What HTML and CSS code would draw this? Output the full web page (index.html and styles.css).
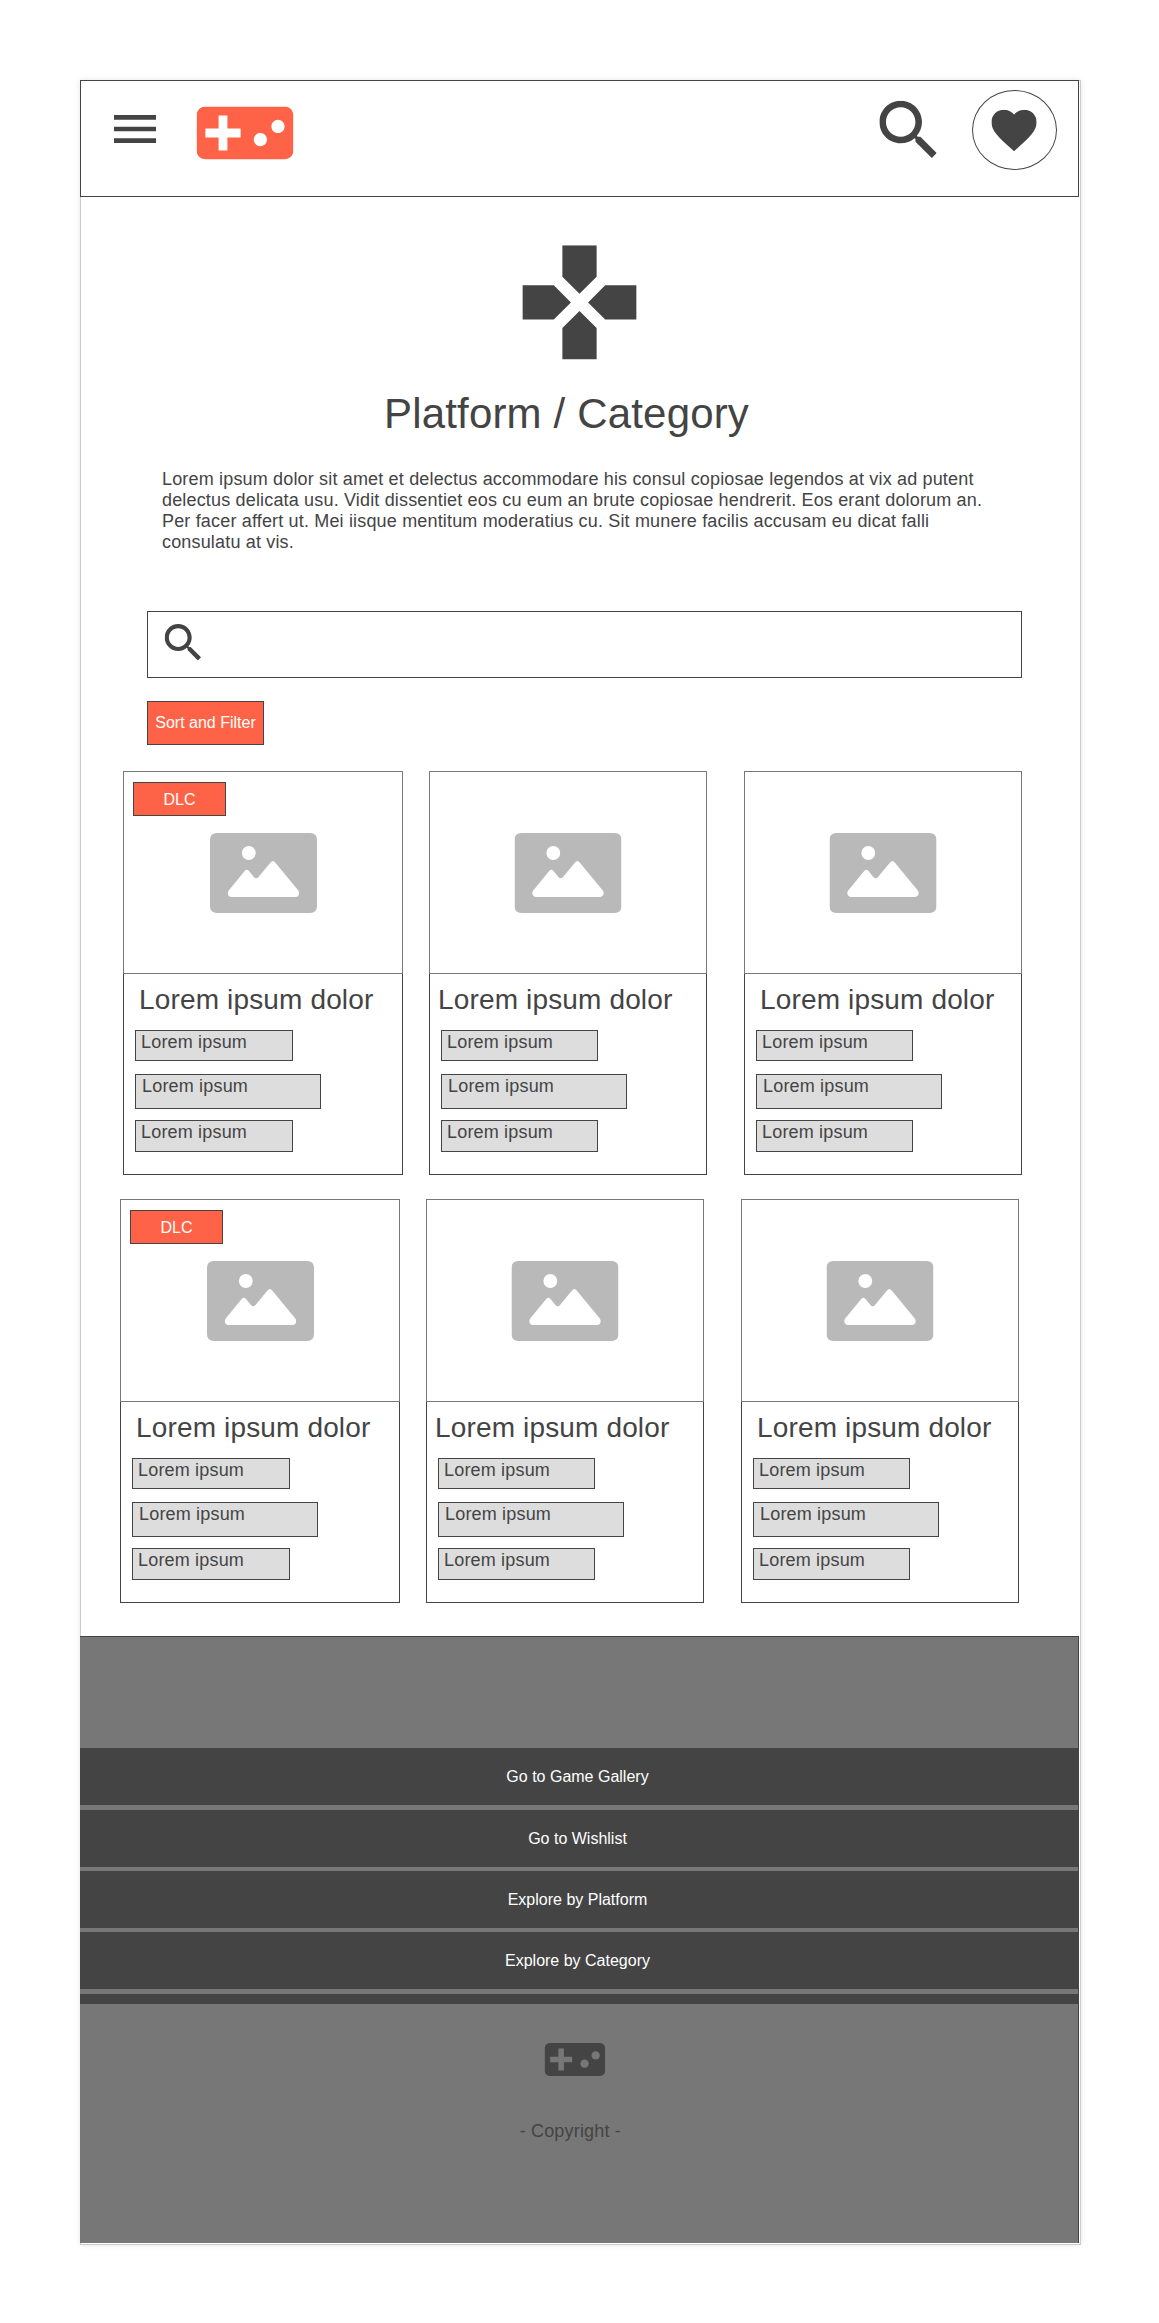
FILE: index.html
```html
<!DOCTYPE html>
<html lang="en">
<head>
<meta charset="utf-8">
<title>Platform / Category</title>
<link rel="stylesheet" href="styles.css">
</head>
<body>
<svg class="defs" aria-hidden="true">
  <symbol id="menu" viewBox="3 6 18 12" preserveAspectRatio="none"><path d="M3 18h18v-2H3v2zm0-5h18v-2H3v2zm0-7v2h18V6H3z"/></symbol>
  <symbol id="gamepad" viewBox="1 6 22 12" preserveAspectRatio="none"><path d="M21 6H3c-1.1 0-2 .9-2 2v8c0 1.1.9 2 2 2h18c1.1 0 2-.9 2-2V8c0-1.1-.9-2-2-2zm-10 7H8v3H6v-3H3v-2h3V8h2v3h3v2zm4.5 2c-.83 0-1.5-.67-1.5-1.5s.67-1.5 1.5-1.5 1.5.67 1.5 1.5-.67 1.5-1.5 1.5zm4-3c-.83 0-1.5-.67-1.5-1.5S18.67 9 19.5 9s1.5.67 1.5 1.5-.67 1.5-1.5 1.5z"/></symbol>
  <symbol id="search" viewBox="3 3 17.49 17.49"><path d="M15.5 14h-.79l-.28-.27C15.41 12.59 16 11.11 16 9.5 16 5.91 13.09 3 9.5 3S3 5.91 3 9.5 5.91 16 9.5 16c1.61 0 3.09-.59 4.23-1.57l.27.28v.79l5 4.99L20.49 19l-4.99-5zm-6 0C7.01 14 5 11.99 5 9.5S7.01 5 9.5 5 14 7.01 14 9.5 11.99 14 9.5 14z"/></symbol>
  <symbol id="heart" viewBox="2 3 20 18.35"><path d="M12 21.35l-1.45-1.32C5.4 15.36 2 12.28 2 8.5 2 5.42 4.42 3 7.5 3c1.74 0 3.41.81 4.5 2.09C13.09 3.81 14.76 3 16.5 3 19.58 3 22 5.42 22 8.5c0 3.78-3.4 6.86-8.55 11.54L12 21.35z"/></symbol>
  <symbol id="dpad" viewBox="2 2 20 20"><path d="M15 7.5V2H9v5.5l3 3 3-3zM7.5 9H2v6h5.5l3-3-3-3zM9 16.5V22h6v-5.5l-3-3-3 3zM16.5 9l-3 3 3 3H22V9h-5.5z"/></symbol>
  <symbol id="picture" viewBox="0 0 107 80"><path fill-rule="evenodd" d="M7 0H100Q107 0 107 7V73Q107 80 100 80H7Q0 80 0 73V7Q0 0 7 0ZM38.8 13.1a6.9 6.9 0 1 0 0 13.8a6.9 6.9 0 1 0 0-13.8ZM21.5 64H85.5C88.7 64 90.2 60.400 88.300 57.600L65.200 29.600Q62.900 26.600 60.500 29.600L48.300 44.200Q46.200 46.500 44.100 44.200L39 38Q36.800 35.500 34.700 38L18.700 57.600C16.800 60.400 18.300 64 21.500 64Z"/></symbol>
</svg>

<div class="frame">
  <header class="topbar">
    <svg class="icon menu"><use href="#menu"/></svg>
    <svg class="icon logo"><use href="#gamepad" x=".6" y=".6" width="96.8" height="52.8"/></svg>
    <svg class="icon find"><use href="#search" x=".4" y=".7" width="57.3" height="57.3"/></svg>
    <div class="wish"><svg class="icon heart"><use href="#heart" x=".4" y=".7" width="45.3" height="41.5"/></svg></div>
  </header>

  <main>
    <section class="intro">
      <svg class="icon dpad"><use href="#dpad" x=".4" y=".3" width="114.2" height="114.2"/></svg>
      <h1 class="title">Platform / Category</h1>
      <p class="lead">Lorem ipsum dolor sit amet et delectus accommodare his consul copiosae legendos at vix ad putent delectus delicata usu. Vidit dissentiet eos cu eum an brute copiosae hendrerit. Eos erant dolorum an. Per facer affert ut. Mei iisque mentitum moderatius cu. Sit munere facilis accusam eu dicat falli consulatu at vis.</p>
    </section>

    <div class="searchbox"><svg class="icon glass"><use href="#search" x=".7" y=".1" width="36.3" height="36.3"/></svg></div>
    <div class="sort">Sort and Filter</div>

    <div class="row">
      <article class="card first">
        <div class="cover"><span class="dlc">DLC</span><svg class="picture"><use href="#picture" width="107" height="80"/></svg></div>
        <div class="info"><h2 class="name">Lorem ipsum dolor</h2><div class="chip">Lorem ipsum</div><div class="chip mid">Lorem ipsum</div><div class="chip last">Lorem ipsum</div></div>
      </article>
      <article class="card second">
        <div class="cover"><svg class="picture"><use href="#picture" x=".5" width="107" height="80"/></svg></div>
        <div class="info"><h2 class="name">Lorem ipsum dolor</h2><div class="chip">Lorem ipsum</div><div class="chip mid">Lorem ipsum</div><div class="chip last">Lorem ipsum</div></div>
      </article>
      <article class="card third">
        <div class="cover"><svg class="picture"><use href="#picture" x=".5" width="107" height="80"/></svg></div>
        <div class="info"><h2 class="name">Lorem ipsum dolor</h2><div class="chip">Lorem ipsum</div><div class="chip mid">Lorem ipsum</div><div class="chip last">Lorem ipsum</div></div>
      </article>
    </div>
    <div class="row lower">
      <article class="card first">
        <div class="cover"><span class="dlc">DLC</span><svg class="picture"><use href="#picture" width="107" height="80"/></svg></div>
        <div class="info"><h2 class="name">Lorem ipsum dolor</h2><div class="chip">Lorem ipsum</div><div class="chip mid">Lorem ipsum</div><div class="chip last">Lorem ipsum</div></div>
      </article>
      <article class="card second">
        <div class="cover"><svg class="picture"><use href="#picture" x=".5" width="107" height="80"/></svg></div>
        <div class="info"><h2 class="name">Lorem ipsum dolor</h2><div class="chip">Lorem ipsum</div><div class="chip mid">Lorem ipsum</div><div class="chip last">Lorem ipsum</div></div>
      </article>
      <article class="card third">
        <div class="cover"><svg class="picture"><use href="#picture" x=".5" width="107" height="80"/></svg></div>
        <div class="info"><h2 class="name">Lorem ipsum dolor</h2><div class="chip">Lorem ipsum</div><div class="chip mid">Lorem ipsum</div><div class="chip last">Lorem ipsum</div></div>
      </article>
    </div>
  </main>

  <footer class="footer">
    <nav class="links">
      <a class="link">Go to Game Gallery</a>
      <a class="link">Go to Wishlist</a>
      <a class="link">Explore by Platform</a>
      <a class="link">Explore by Category</a>
      <div class="strip"></div>
    </nav>
    <svg class="icon mark"><use href="#gamepad" x=".6" width="60.7" height="33"/></svg>
    <p class="copy">- Copyright -</p>
  </footer>
</div>
</body>
</html>
```
FILE: styles.css
```css
* { box-sizing: border-box; }
body {
  margin: 0;
  padding: 80px 0 78px 80px;
  background: #fff;
  color: #444;
  font-family: "Liberation Sans", Arial, sans-serif;
}
h1, h2, p { margin: 0; font-weight: normal; }
svg { display: block; flex: none; }
.defs { display: none; }
.icon { fill: #444; }

.frame {
  width: 1001px;
  height: 2165px;
  background: #fff;
  box-shadow: inset 0 0 0 1px #ccc, 0 0 6px rgba(0, 0, 0, .1);
}

/* Top bar */
.topbar {
  display: flex;
  align-items: flex-start;
  width: 999px;
  height: 117px;
  padding: 9px 21px 0 33px;
  border: 1px solid #444;
  background: #fff;
}
.menu { width: 42px; height: 28px; margin-top: 25px; }
.logo { width: 98px; height: 54px; margin: 16px 0 0 40px; fill: #ff6347; }
.find { width: 58px; height: 58px; margin: 10px 35px 0 auto; }
.wish {
  width: 85px;
  height: 80px;
  padding: 18px 0 0 18px;
  border: 1px solid #444;
  border-radius: 50%;
}
.heart { width: 46px; height: 43px; }

/* Intro */
.intro { padding: 48px 88px 0 82px; }
.dpad { width: 115px; height: 115px; margin-left: 360px; }
.title {
  margin: 30px 0 0 222px;
  font-size: 42px;
  line-height: 47px;
  letter-spacing: .17px;
}
.lead {
  width: 830px;
  margin-top: 32px;
  font-size: 18px;
  line-height: 21px;
  letter-spacing: .168px;
}

.searchbox {
  width: 875px;
  height: 67px;
  margin: 58px 0 0 67px;
  padding: 12px 0 0 16px;
  border: 1px solid #444;
}
.glass { width: 37px; height: 37px; }
.sort {
  display: flex;
  align-items: center;
  justify-content: center;
  width: 117px;
  height: 44px;
  margin: 23px 0 0 67px;
  border: 1px solid #444;
  background: #ff6347;
  color: #fff;
  font-size: 16px;
}

/* Cards */
.row { display: flex; padding: 26px 0 0 43px; }
.row.lower { padding: 24px 0 0 40px; }
.card { width: 278px; height: 404px; }
.card.first { width: 280px; }
.card.second { margin-left: 26px; }
.card.third { margin-left: 37px; }
.cover {
  position: relative;
  display: flex;
  justify-content: center;
  height: 203px;
  padding-top: 61px;
  border: 1px solid #777;
}
.dlc {
  position: absolute;
  top: 10px;
  left: 9px;
  width: 93px;
  height: 34px;
  padding-top: 1px;
  border: 1px solid #444;
  background: #ff6347;
  color: #fff;
  font-size: 16px;
  line-height: 32px;
  text-align: center;
}
.picture { width: 108px; height: 80px; fill: #b9b9b9; }
.info {
  height: 201px;
  padding: 10px 0 0 11px;
  border: 1px solid #444;
  border-top: 0;
}
.name {
  padding-left: 4px;
  font-size: 28px;
  line-height: 32px;
  letter-spacing: .15px;
  white-space: nowrap;
}
.second .name { margin-left: -7px; }
.chip {
  width: 157px;
  height: 31px;
  margin-top: 14px;
  padding: 1px 0 0 5px;
  border: 1px solid #444;
  background: #ddd;
  font-size: 18px;
  line-height: 20px;
  letter-spacing: .18px;
}
.first .chip { width: 158px; }
.card .chip.mid { width: 186px; height: 35px; margin-top: 13px; padding-left: 6px; }
.chip.last { height: 32px; margin-top: 11px; }
.first .picture { margin-left: 2px; }

/* Footer */
.footer {
  width: 999px;
  height: 607px;
  margin-top: 33px;
  border: solid #444;
  border-width: 1px 1px 0 0;
  background: #777;
}
.links { margin-right: -1px; padding-top: 111px; }
.link {
  display: block;
  height: 57px;
  margin-bottom: 4px;
  padding-right: 4px;
  background: #444;
  color: #fff;
  font-size: 16px;
  line-height: 57px;
  text-align: center;
}
.link:first-child, .link:nth-child(4) { margin-bottom: 5px; }
.strip { height: 10px; background: #444; }
.mark { width: 62px; height: 33px; margin: 39px 0 0 464px; }
.copy {
  margin: 45px 0 0 439.700px;
  font-size: 18px;
  line-height: 20px;
  letter-spacing: .17px;
}
```
